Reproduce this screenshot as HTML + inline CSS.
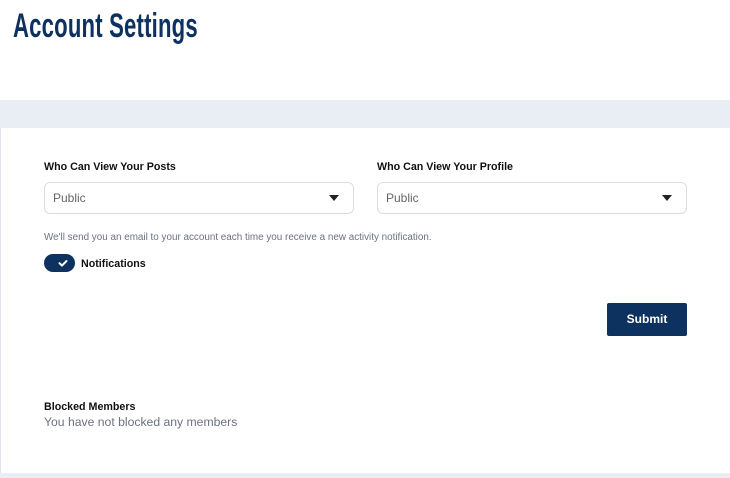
<!DOCTYPE html>
<html><head><meta charset="utf-8"><style>
*{margin:0;padding:0;box-sizing:border-box}
body{width:730px;height:478px;overflow:hidden;background:#fff;font-family:"Liberation Sans",sans-serif;position:relative}
.title{position:absolute;left:13px;top:7px;font-size:34px;font-weight:bold;color:#0d3260;transform:scaleX(0.65);transform-origin:left top;white-space:nowrap;letter-spacing:0.3px}
.band{position:absolute;left:0;top:100px;width:730px;height:28px;background:#e9eef5}
.bottom{position:absolute;left:0;top:473px;width:730px;height:5px;background:#e9eef5}
.lb{position:absolute;left:0;top:128px;width:1px;height:345px;background:#e2e6ec}
.lbl{position:absolute;font-size:10.7px;font-weight:bold;color:#111}
.sel{position:absolute;top:182px;height:32px;border:1px solid #dcdcdc;border-radius:6px;font-size:12px;color:#666;padding:8px 0 0 8px}
.sel svg{position:absolute;right:14px;top:12px}
.note{position:absolute;left:44px;top:232px;font-size:9.9px;color:#6b7280}
.tog{position:absolute;left:44px;top:254px;width:31px;height:18px;border-radius:9px;background:#0d3260}
.btn{position:absolute;left:607px;top:303px;width:80px;height:33px;background:#0d3260;border-radius:2px;color:#fff;font-size:12px;font-weight:bold;text-align:center;line-height:33px}
</style></head><body>
<div class="title">Account Settings</div>
<div class="band"></div>
<div class="lb"></div>
<div class="lbl" style="left:44px;top:161px">Who Can View Your Posts</div>
<div class="lbl" style="left:377px;top:161px">Who Can View Your Profile</div>
<div class="sel" style="left:44px;width:310px">Public<svg width="10" height="6"><path d="M0 0H10L5 6Z" fill="#222"/></svg></div>
<div class="sel" style="left:377px;width:310px">Public<svg width="10" height="6"><path d="M0 0H10L5 6Z" fill="#222"/></svg></div>
<div class="note">We'll send you an email to your account each time you receive a new activity notification.</div>
<div class="tog"><svg width="31" height="18"><path d="M15.5 9.2l2.5 2.4 4.5-4.6" stroke="#fff" stroke-width="2" fill="none" stroke-linecap="round" stroke-linejoin="round"/></svg></div>
<div class="lbl" style="left:81px;top:258px">Notifications</div>
<div class="btn">Submit</div>
<div class="lbl" style="left:44px;top:401px">Blocked Members</div>
<div style="position:absolute;left:44px;top:415px;font-size:12.2px;color:#6b7280">You have not blocked any members</div>
<div class="bottom"></div>
</body></html>
